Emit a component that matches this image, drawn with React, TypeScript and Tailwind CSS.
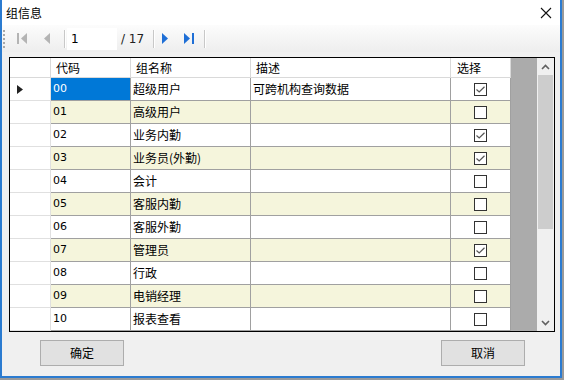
import React from "react"

type Row = { code: string; name: string; desc: string; checked: boolean }

const rows: Row[] = [
   { code: "00", name: "超级用户", desc: "可跨机构查询数据", checked: true },
   { code: "01", name: "高级用户", desc: "", checked: false },
   { code: "02", name: "业务内勤", desc: "", checked: true },
   { code: "03", name: "业务员(外勤)", desc: "", checked: true },
   { code: "04", name: "会计", desc: "", checked: false },
   { code: "05", name: "客服内勤", desc: "", checked: false },
   { code: "06", name: "客服外勤", desc: "", checked: false },
   { code: "07", name: "管理员", desc: "", checked: true },
   { code: "08", name: "行政", desc: "", checked: false },
   { code: "09", name: "电销经理", desc: "", checked: false },
   { code: "10", name: "报表查看", desc: "", checked: false },
]

const cjk = "font-['SimSun','Noto_Sans_CJK_SC',sans-serif]"

function CheckBox({ checked }: { checked: boolean }) {
   return (
      <div className="w-[13px] h-[13px] border border-[#333333] bg-white flex items-center justify-center">
         {checked && (
            <svg width="9" height="7" viewBox="0 0 9 7">
               <path d="M0.5 3.5 L3.2 6 L8.5 0.8" stroke="#555555" strokeWidth="1.2" fill="none" />
            </svg>
         )}
      </div>
   )
}

function Separator() {
   return <div className="w-[2px] h-[18px] border-l border-[#c8c8c8] border-r border-r-white" />
}

export default function App() {
   return (
      <div className={`w-[564px] h-[380px] bg-[#9a9a9a] ${cjk}`}>
         <div className="w-[562px] h-[378px] flex flex-col border-l-2 border-r-2 border-b-2 border-[#2b7bd0] bg-[#f0f0f0]">
            {/* Title bar */}
            <div className="h-[25px] bg-white flex items-center justify-between pl-[4px] pr-[8px]">
               <span className="text-[12px] text-black leading-none">组信息</span>
               <svg width="12" height="12" viewBox="0 0 12 12">
                  <path d="M1 1 L11 11 M11 1 L1 11" stroke="#111" strokeWidth="1.1" />
               </svg>
            </div>

            {/* Navigator toolbar */}
            <div className="h-[27px] bg-gradient-to-b from-[#fcfcfc] to-[#eeeeee] flex items-center">
               <div className="flex flex-col gap-[2px] ml-[1px]">
                  {[0, 1, 2, 3, 4].map(i => (
                     <div key={i} className="w-[2px] h-[2px] bg-[#a8a8a8]" />
                  ))}
               </div>
               <svg className="ml-[12px]" width="11" height="11" viewBox="0 0 11 11">
                  <rect x="0" y="0" width="2" height="11" fill="#b4b4b4" />
                  <path d="M10 0 L4 5.5 L10 11 Z" fill="#b4b4b4" />
               </svg>
               <svg className="ml-[15px]" width="7" height="11" viewBox="0 0 7 11">
                  <path d="M7 0 L1 5.5 L7 11 Z" fill="#b4b4b4" />
               </svg>
               <div className="ml-[14px]"><Separator /></div>
               <div className="ml-[1px] w-[50px] h-[22px] bg-white flex items-center pl-[4px] text-[12px] font-['Tahoma','DejaVu_Sans',sans-serif] text-black">
                  1
               </div>
               <span className="ml-[4px] w-[28px] text-[12px] font-['Tahoma','DejaVu_Sans',sans-serif] text-[#222] whitespace-nowrap">/ 17</span>
               <div className="ml-[4px]"><Separator /></div>
               <svg className="ml-[7px]" width="7" height="11" viewBox="0 0 7 11">
                  <path d="M0 0 L6 5.5 L0 11 Z" fill="#1f6fd6" />
               </svg>
               <svg className="ml-[15px]" width="11" height="11" viewBox="0 0 11 11">
                  <path d="M0 0 L6 5.5 L0 11 Z" fill="#1f6fd6" />
                  <rect x="8" y="0" width="2" height="11" fill="#1f6fd6" />
               </svg>
               <div className="ml-[9px]"><Separator /></div>
            </div>

            {/* Grid */}
            <div className="mt-[5px] ml-[7px] w-[546px] h-[275px] border border-black flex bg-white">
               <div className="w-[501px] h-full overflow-hidden flex flex-col">
                  <div className="flex h-[20px] shrink-0 text-[12px] text-black">
                     <div className="w-[41px] border-r border-b border-[#d9d9d9]" />
                     <div className="w-[80px] border-r border-b border-[#d9d9d9] pl-[5px] flex items-center">代码</div>
                     <div className="w-[120px] border-r border-b border-[#d9d9d9] pl-[5px] flex items-center">组名称</div>
                     <div className="w-[200px] border-r border-b border-[#d9d9d9] pl-[5px] flex items-center">描述</div>
                     <div className="w-[60px] border-r border-b border-[#d9d9d9] pl-[6px] flex items-center">选择</div>
                  </div>
                  {rows.map((r, i) => {
                     const bg = i % 2 === 1 ? "bg-[#f5f5dc]" : "bg-white"
                     return (
                        <div key={r.code} className="flex h-[23px] shrink-0 text-[12px] text-black">
                           <div className="w-[41px] border-r border-b border-[#e0e0e0] bg-white flex items-center pl-[7px]">
                              {i === 0 && (
                                 <svg width="6" height="9" viewBox="0 0 6 9">
                                    <path d="M0 0 L6 4.5 L0 9 Z" fill="#222" />
                                 </svg>
                              )}
                           </div>
                           <div
                              className={`w-[80px] border-r border-b border-[#a0a0a0] pl-[2px] flex items-center text-[11px] font-['Tahoma','DejaVu_Sans',sans-serif] ${i === 0 ? "bg-[#0078d7] text-white" : bg}`}
                           >
                              {r.code}
                           </div>
                           <div className={`w-[120px] border-r border-b border-[#a0a0a0] pl-[2px] flex items-center ${bg}`}>{r.name}</div>
                           <div className={`w-[200px] border-r border-b border-[#a0a0a0] pl-[2px] flex items-center ${bg}`}>{r.desc}</div>
                           <div className={`w-[60px] border-r border-b border-[#a0a0a0] flex items-center justify-center ${bg}`}>
                              <CheckBox checked={r.checked} />
                           </div>
                        </div>
                     )
                  })}
                  {/* sliver of the next row */}
                  <div className="flex h-[23px] shrink-0">
                     <div className="w-[41px] border-r border-[#e0e0e0]" />
                     <div className="w-[80px] border-r border-[#a0a0a0] bg-[#f5f5dc]" />
                     <div className="w-[120px] border-r border-[#a0a0a0] bg-[#f5f5dc]" />
                     <div className="w-[200px] border-r border-[#a0a0a0] bg-[#f5f5dc]" />
                     <div className="w-[60px] border-r border-[#a0a0a0] bg-[#f5f5dc]" />
                  </div>
               </div>
               <div className="w-[26px] h-full bg-[#ababab]" />
               <div className="w-[17px] h-full bg-[#f0f0f0] flex flex-col items-center">
                  <div className="h-[17px] w-full flex items-center justify-center">
                     <svg width="9" height="6" viewBox="0 0 9 6">
                        <path d="M1 5 L4.5 1.5 L8 5" stroke="#606060" strokeWidth="1.6" fill="none" />
                     </svg>
                  </div>
                  <div className="w-[15px] h-[154px] bg-[#cdcdcd]" />
                  <div className="flex-1" />
                  <div className="h-[17px] w-full flex items-center justify-center">
                     <svg width="9" height="6" viewBox="0 0 9 6">
                        <path d="M1 1 L4.5 4.5 L8 1" stroke="#606060" strokeWidth="1.6" fill="none" />
                     </svg>
                  </div>
               </div>
            </div>

            {/* Buttons */}
            <div className="flex justify-between mt-[8px] pl-[38px] pr-[35px]">
               <button className="w-[84px] h-[26px] bg-[#e1e1e1] border border-[#adadad] text-[12px] leading-[24px] text-black flex items-center justify-center">确定</button>
               <button className="w-[84px] h-[26px] bg-[#e1e1e1] border border-[#adadad] text-[12px] leading-[24px] text-black flex items-center justify-center">取消</button>
            </div>
         </div>
      </div>
   )
}
